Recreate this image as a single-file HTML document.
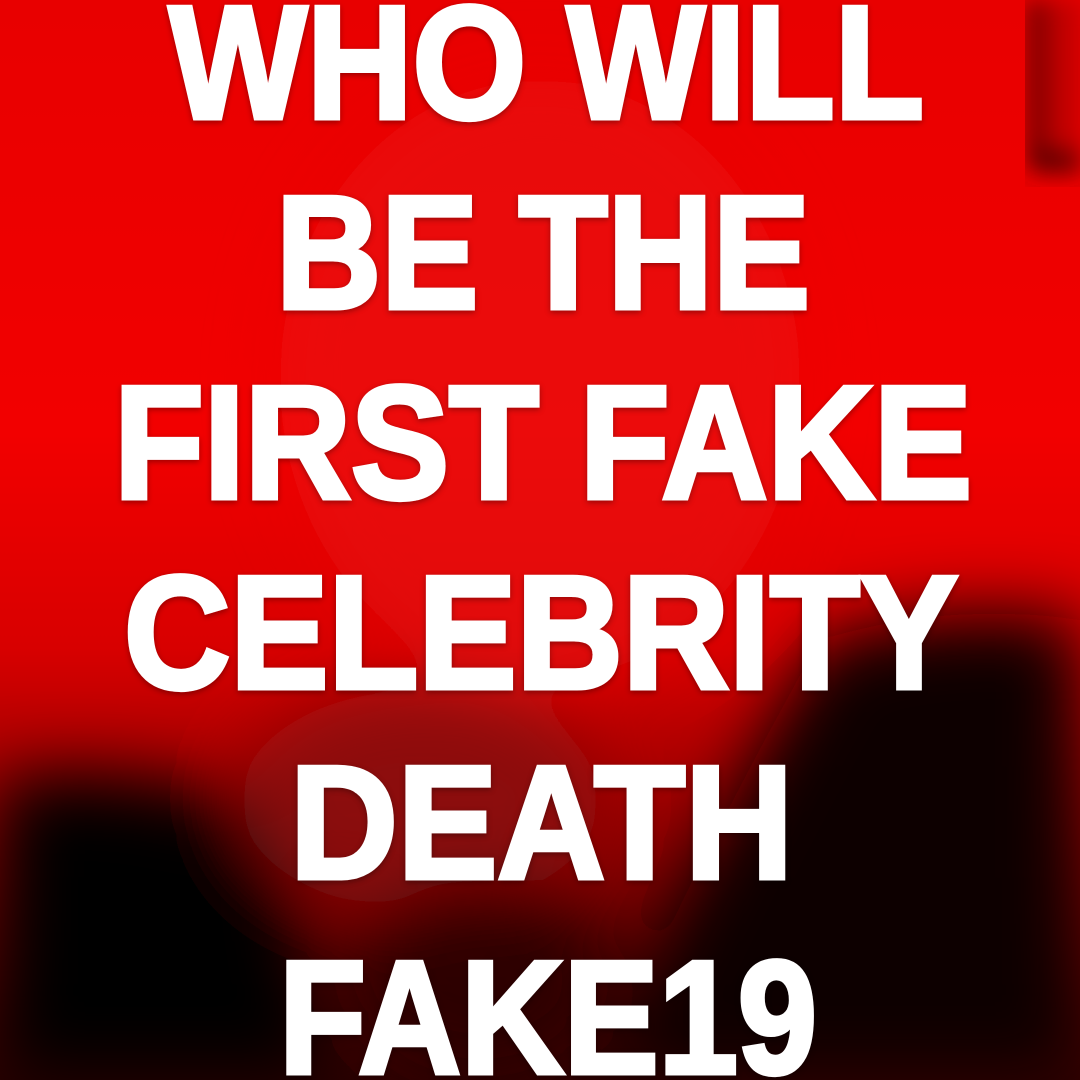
<!DOCTYPE html>
<html><head><meta charset="utf-8"><style>
html,body{margin:0;padding:0;width:1080px;height:1080px;overflow:hidden;background:#000}
svg{position:absolute;left:0;top:0}
text{font-family:"Liberation Sans",Arial,sans-serif;font-weight:bold;font-size:161px;fill:#fff;stroke:#fff;stroke-width:5px;stroke-linejoin:miter}
</style></head><body>
<svg width="1080" height="1080" viewBox="0 0 1080 1080">
<defs>
<filter id="b"><feGaussianBlur stdDeviation="35"/></filter>
<filter id="b2"><feGaussianBlur stdDeviation="12"/></filter>
<filter id="s"><feDropShadow dx="0" dy="2" stdDeviation="3" flood-color="#000" flood-opacity="0.35"/></filter>
<linearGradient id="g" x1="0" y1="0" x2="0" y2="1">
<stop offset="0" stop-color="#e80000"/><stop offset="0.4" stop-color="#f20000"/>
<stop offset="0.6" stop-color="#d80000"/><stop offset="0.75" stop-color="#9a0000"/>
<stop offset="1" stop-color="#300000"/></linearGradient>
</defs>
<rect width="1080" height="1080" fill="url(#g)"/>
<g filter="url(#b)">
<ellipse cx="540" cy="380" rx="260" ry="300" fill="#e81010" opacity="0.6"/>
<path d="M820 640 Q950 600 1080 620 L1080 1080 L600 1080 Q700 850 820 640Z" fill="#080000"/>
<path d="M0 780 Q150 760 280 820 L330 1080 L0 1080Z" fill="#050000"/>
<ellipse cx="420" cy="800" rx="180" ry="110" fill="#8a0808" opacity="0.9"/>
<ellipse cx="480" cy="980" rx="130" ry="100" fill="#2a0000" opacity="0.9"/>
</g>
<g filter="url(#b2)">
<rect x="1030" y="0" width="50" height="170" fill="#300000"/>
<rect x="1045" y="0" width="35" height="150" fill="#c00000"/>
</g>
<g filter="url(#s)">
<text x="169" y="118" textLength="755" lengthAdjust="spacingAndGlyphs">WHO WILL</text>
<text x="276" y="308" textLength="534" lengthAdjust="spacingAndGlyphs">BE THE</text>
<text x="114" y="498" textLength="858" lengthAdjust="spacingAndGlyphs">FIRST FAKE</text>
<text x="124" y="688" textLength="834" lengthAdjust="spacingAndGlyphs">CELEBRITY</text>
<text x="290" y="878" textLength="503" lengthAdjust="spacingAndGlyphs">DEATH</text>
<text x="279" y="1073" textLength="538" lengthAdjust="spacingAndGlyphs">FAKE19</text>
</g>
</svg>
</body></html>
